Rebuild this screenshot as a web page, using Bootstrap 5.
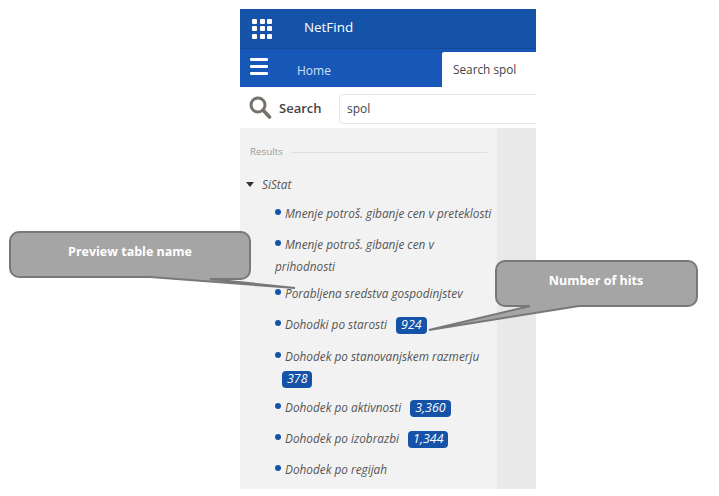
<!DOCTYPE html>
<html lang="en">
<head>
    <meta charset="UTF-8">
    <title>NetFind</title>
    <link href="https://cdn.jsdelivr.net/npm/bootstrap@5.3.0/dist/css/bootstrap.min.css" rel="stylesheet">
    <style>
        html, body { height: 100%; }
        body {
            background: #fff;
            font-family: "Open Sans", "Noto Sans", sans-serif;
            position: relative;
            overflow: hidden;
            width: 719px;
            height: 496px;
        }
        .app-frame {
            width: 296px;
            height: 480px;
            margin: 9px 0 0 240px;
            overflow: hidden;
        }
        .top-bar {
            height: 39px;
            background: #1553a8;
            color: #fff;
            font-size: 13.4px;
            padding: 0 0 2px 12px;
            gap: 32px;
        }
        .dots {
            display: grid;
            grid-template-columns: repeat(3, 5px);
            gap: 2.5px;
            width: 20px;
            margin-top: 2px;
        }
        .dots span { width: 5px; height: 5px; background: #fff; border-radius: 1px; }
        .tab-bar {
            height: 39px;
            background: #1657b8;
            border-top: 1px solid #134a98;
            padding-left: 10px;
        }
        .burger { width: 18px; margin-top: 9px; }
        .burger span { display: block; height: 3px; background: #fff; margin-bottom: 4px; border-radius: 1px; }
        .tab-home { color: #cfe0f5; font-size: 12px; margin-left: 29px; width: 145px; padding-top: 13px; }
        .tab-search {
            background: #fff;
            color: #444;
            font-size: 11.8px;
            flex: 1;
            margin-top: 3px;
            padding: 9px 0 0 11px;
            border-top-left-radius: 2px;
        }
        .search-row { height: 41px; background: #fff; padding-left: 9px; }
        .search-label { font-size: 13px; font-weight: 600; color: #444; margin: 2px 0 0 7px; width: 60px; }
        .search-box {
            flex: 1;
            height: 30px;
            border: 1px solid #e6e6e6;
            border-right: 0;
            border-radius: 4px 0 0 4px;
            font-size: 12px;
            color: #444;
            padding: 5px 7px;
            margin-top: 2px;
        }
        .content-area { height: 361px; background: #e9e9e9; }
        .side-panel {
            width: 257px;
            height: 100%;
            background: #f2f2f2;
            padding: 17px 10px 0 0;
            color: #555;
            font-style: italic;
            font-size: 11.8px;
        }
        .results-head {
            font-style: normal;
            font-size: 9.8px;
            color: #999;
            padding-left: 10px;
            gap: 8px;
        }
        .results-head hr { flex: 1; margin: 0; border-top: 1px solid #aaa; }
        .group-name { padding-left: 6px; margin-top: 14px; height: 22px; gap: 8px; }
        .caret-down {
            width: 0; height: 0;
            border-left: 4px solid transparent;
            border-right: 4px solid transparent;
            border-top: 5px solid #333;
        }
        .hit-list { list-style: none; margin: 0; padding: 6px 0 0 35px; }
        .hit-list li { line-height: 22px; margin-bottom: 9px; white-space: nowrap; }
        .hit-list li.two-line { margin-bottom: 5px; }
        .hit-list li.badge-row { margin-bottom: 10px; }
        .hit-list li.badge-wrap { margin-bottom: 7px; }
        .hit-list li::before {
            content: "";
            display: inline-block;
            width: 6px; height: 6px;
            border-radius: 50%;
            background: #1553a8;
            margin: 0 4px 3px 0;
        }
        .hit-count {
            display: inline-block;
            background: #1553a8;
            color: #fff;
            border-radius: 4px;
            font-size: 12.4px;
            line-height: 16px;
            height: 17px;
            padding: 0 5px;
            margin-left: 6px;
        }
        .hit-count.wrapped { margin-left: 7px; }
        .note-layer { position: absolute; left: 0; top: 0; pointer-events: none; }
        .note-text {
            position: absolute;
            color: #fff;
            font-size: 12.5px;
            font-weight: 700;
            text-align: center;
        }
        .note-left { left: 10px; width: 240px; top: 243px; }
        .note-right { left: 496px; width: 200px; top: 272px; }
    </style>
</head>
<body>
    <div class="app-frame">
        <div class="top-bar d-flex align-items-center">
            <div class="dots"><span></span><span></span><span></span><span></span><span></span><span></span><span></span><span></span><span></span></div>
            <div>NetFind</div>
        </div>
        <div class="tab-bar d-flex">
            <div class="burger"><span></span><span></span><span></span></div>
            <div class="tab-home">Home</div>
            <div class="tab-search">Search spol</div>
        </div>
        <div class="search-row d-flex align-items-center">
            <svg width="23" height="24" viewBox="0 0 23 24"><circle cx="9" cy="9" r="7" fill="none" stroke="#77716b" stroke-width="3"/><line x1="14" y1="14" x2="20.5" y2="21" stroke="#77716b" stroke-width="3.6" stroke-linecap="round"/></svg>
            <div class="search-label">Search</div>
            <div class="search-box">spol</div>
        </div>
        <div class="content-area">
            <div class="side-panel">
                <div class="results-head d-flex align-items-center">Results<hr></div>
                <div class="group-name d-flex align-items-center"><span class="caret-down"></span>SiStat</div>
                <ul class="hit-list">
                    <li>Mnenje potroš. gibanje cen v preteklosti</li>
                    <li class="two-line">Mnenje potroš. gibanje cen v<br>prihodnosti</li>
                    <li>Porabljena sredstva gospodinjstev</li>
                    <li class="badge-row">Dohodki po starosti <span class="hit-count">924</span></li>
                    <li class="badge-wrap">Dohodek po stanovanjskem razmerju<br><span class="hit-count wrapped">378</span></li>
                    <li>Dohodek po aktivnosti <span class="hit-count">3,360</span></li>
                    <li>Dohodek po izobrazbi <span class="hit-count">1,344</span></li>
                    <li>Dohodek po regijah</li>
                </ul>
            </div>
        </div>
    </div>

    <svg class="note-layer" width="719" height="496" viewBox="0 0 719 496">
        <path d="M19 232H241a9 9 0 0 1 9 9v29a9 9 0 0 1 -9 9H210L295 288L150 277H19a9 9 0 0 1 -9 -9V241a9 9 0 0 1 9 -9Z" fill="#a5a5a5" stroke="#787878" stroke-width="2"/>
        <path d="M505 261H688a9 9 0 0 1 9 9v27a9 9 0 0 1 -9 9H579L429 330L530 306H505a9 9 0 0 1 -9 -9V270a9 9 0 0 1 9 -9Z" fill="#a5a5a5" stroke="#787878" stroke-width="2"/>
    </svg>
    <div class="note-text note-left">Preview table name</div>
    <div class="note-text note-right">Number of hits</div>

    <script src="https://cdn.jsdelivr.net/npm/bootstrap@5.3.0/dist/js/bootstrap.bundle.min.js"></script>
</body>
</html>
